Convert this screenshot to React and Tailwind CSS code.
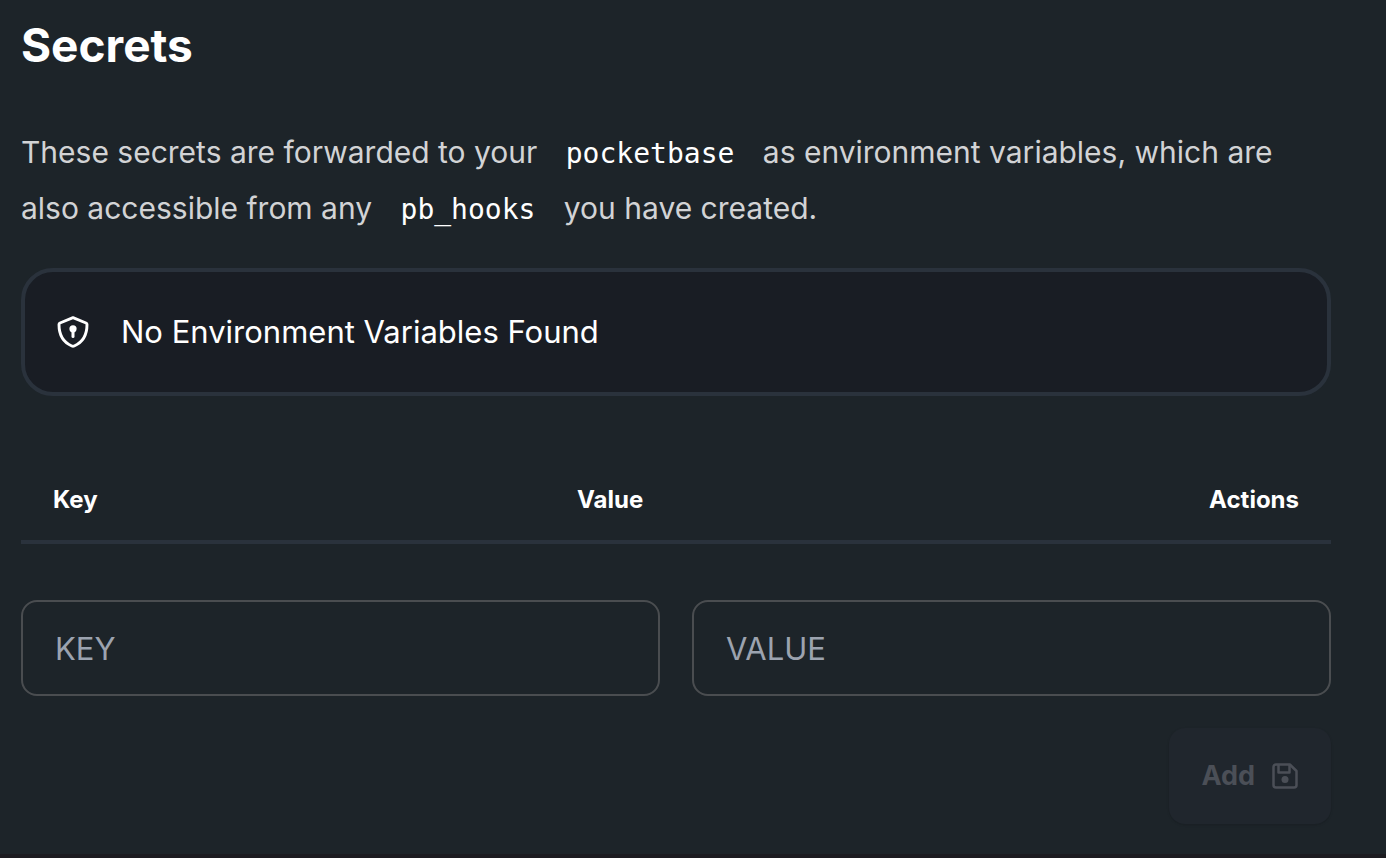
function ShieldKeyholeIcon() {
  return (
    <svg className="size-8 shrink-0" viewBox="0 0 32 32" fill="none" aria-hidden="true">
      <path
        d="M16 1.7 L29 7 Q30 7.4 30 8.6 C30 18.5 25.5 26.5 17.2 30 Q16 30.5 14.8 30 C6.5 26.5 2 18.5 2 8.6 Q2 7.4 3 7 Z"
        stroke="currentColor"
        strokeWidth="2.9"
        strokeLinejoin="round"
      />
      <circle cx="16" cy="12.8" r="3.6" fill="currentColor" />
      <path d="M16 13v7.5" stroke="currentColor" strokeWidth="3" strokeLinecap="round" />
    </svg>
  );
}

function DiskIcon() {
  return (
    <svg className="size-7 shrink-0" viewBox="0 0 28 28" fill="none" stroke="currentColor" strokeWidth="2.5" aria-hidden="true">
      <path d="M5 2.5h13.8L25.5 9v14a2.5 2.5 0 0 1-2.5 2.5H5A2.5 2.5 0 0 1 2.5 23V5A2.5 2.5 0 0 1 5 2.5Z" strokeLinejoin="round" />
      <path d="M7.5 2.5v8h11v-8" strokeLinejoin="round" />
      <circle cx="14" cy="17.5" r="3.5" fill="currentColor" stroke="none" />
    </svg>
  );
}

function InlineCode({ children }) {
  return (
    <code className="mx-5 font-['DejaVu_Sans_Mono',monospace] text-[28px] leading-none text-white">{children}</code>
  );
}

function SecretField({ label }) {
  return (
    <input
      type="text"
      aria-label={label}
      placeholder={label}
      className="h-24 min-w-0 flex-1 rounded-2xl border-2 border-[#4a4d50] bg-transparent px-8 text-[31px] text-white placeholder:text-[#9ca3af]"
    />
  );
}

export default function App() {
  return (
    <main className="min-h-screen border-b-4 border-[#1c1b20] bg-[#1d2429] pt-[14px] pr-[55px] pb-7 pl-[21px] font-[Inter,sans-serif] text-white">
      <h1 className="text-[46px] leading-[62px] font-bold">Secrets</h1>

      <p className="mt-12 text-[30px] leading-14 text-[#d2d3d5]">
        These secrets are forwarded to your <InlineCode>pocketbase</InlineCode> as environment variables, which are
        also accessible from any <InlineCode>pb_hooks</InlineCode> you have created.
      </p>

      <div role="status" className="mt-8 flex items-center gap-8 rounded-[32px] border-4 border-[#2a323c] bg-[#191d24] px-8 py-9">
        <ShieldKeyholeIcon />
        <span className="text-[31px] leading-12">No Environment Variables Found</span>
      </div>

      <table className="mt-16 w-full table-fixed text-left text-2xl leading-8">
        <thead>
          <tr className="border-b-4 border-[#2a323c]">
            <th scope="col" className="w-2/5 px-8 py-6 font-bold">Key</th>
            <th scope="col" className="w-2/5 px-8 py-6 font-bold">Value</th>
            <th scope="col" className="px-8 py-6 text-right font-bold">Actions</th>
          </tr>
        </thead>
      </table>

      <form className="mt-14">
        <div className="flex gap-8">
          <SecretField label="KEY" />
          <SecretField label="VALUE" />
        </div>
        <div className="mt-8 flex justify-end">
          <button
            type="submit"
            disabled
            className="flex h-24 items-center gap-4 rounded-2xl bg-[#20262d] px-8 text-[27px] font-bold text-[#4b4f57] shadow-sm"
          >
            Add
            <DiskIcon />
          </button>
        </div>
      </form>
    </main>
  );
}
